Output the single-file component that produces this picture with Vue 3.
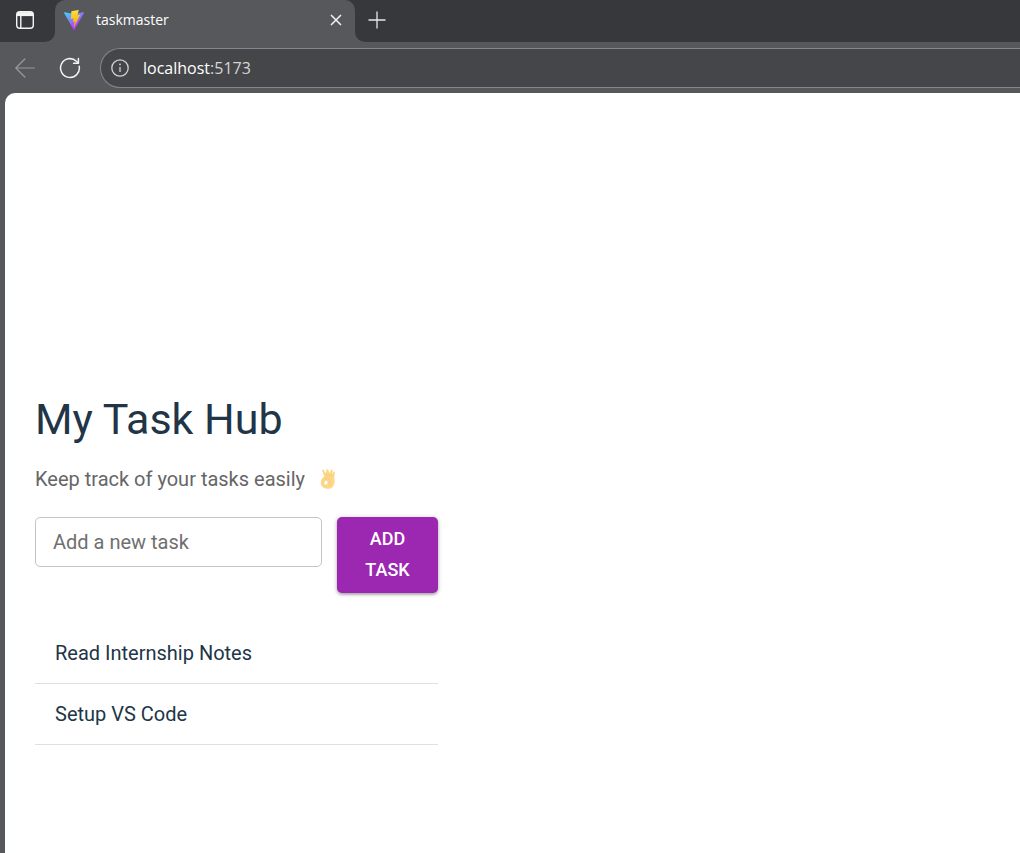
<script setup>
import { ref } from 'vue'

const draft = ref('')
const tasks = ref(['Read Internship Notes', 'Setup VS Code'])

function addTask() {
  const text = draft.value.trim()
  if (!text) return
  tasks.value.push(text)
  draft.value = ''
}
</script>

<template>
  <div class="browser">
    <header class="tabs">
      <div class="tabs-start">
        <button class="icon-button" type="button" aria-label="Tab actions">
          <svg width="20" height="20" viewBox="0 0 20 20" fill="none" stroke="#f4f4f4" stroke-width="1.4">
            <rect x="1.7" y="1.7" width="16.6" height="16.6" rx="3" />
            <path d="M2 4.1h16" stroke-width="4" />
            <path d="M5.8 6v12" />
          </svg>
        </button>
      </div>
      <div class="tab">
        <svg width="20" height="20" viewBox="0 0 256 257" aria-hidden="true">
          <defs>
            <linearGradient id="v-body" x1="0" x2="0.58" y1="0.08" y2="0.9">
              <stop offset="0" stop-color="#41d1ff" />
              <stop offset="1" stop-color="#bd34fe" />
            </linearGradient>
            <linearGradient id="v-bolt" x1="0.43" x2="0.5" y1="0.02" y2="0.9">
              <stop offset="0" stop-color="#ffea83" />
              <stop offset="0.08" stop-color="#ffdd35" />
              <stop offset="1" stop-color="#ffa800" />
            </linearGradient>
          </defs>
          <path fill="url(#v-body)" d="M255.153 37.938 134.897 252.976c-2.483 4.44-8.862 4.466-11.382.048L.875 37.958c-2.746-4.814 1.371-10.646 6.827-9.67l120.385 21.517a6.537 6.537 0 0 0 2.322-.004l117.867-21.483c5.438-.991 9.574 4.796 6.877 9.62Z" />
          <path fill="url(#v-bolt)" d="M185.432.063 96.44 17.501a3.268 3.268 0 0 0-2.634 3.014l-5.474 92.456a3.268 3.268 0 0 0 3.997 3.378l24.777-5.718c2.318-.535 4.413 1.507 3.936 3.838l-7.361 36.047c-.495 2.426 1.782 4.5 4.151 3.78l15.304-4.649c2.372-.72 4.652 1.36 4.15 3.788l-11.698 56.621c-.732 3.542 3.979 5.473 5.943 2.437l1.313-2.028 72.516-144.72c1.215-2.423-.88-5.186-3.54-4.672l-25.505 4.922c-2.396.462-4.435-1.77-3.759-4.114l16.646-57.705c.677-2.35-1.37-4.583-3.769-4.113Z" />
        </svg>
        <span class="tab-title">taskmaster</span>
        <button class="icon-button" type="button" aria-label="Close tab">
          <svg width="12" height="12" viewBox="0 0 12 12" stroke="#f4f4f4" stroke-width="1.5">
            <path d="M1 1l10 10M11 1L1 11" />
          </svg>
        </button>
      </div>
      <div class="tabs-end">
        <button class="icon-button" type="button" aria-label="New tab">
          <svg width="18" height="18" viewBox="0 0 18 18" stroke="#e8e8e8" stroke-width="1.3">
            <path d="M9 .5v17M.5 9h17" />
          </svg>
        </button>
      </div>
    </header>

    <nav class="toolbar">
      <button class="icon-button" type="button" aria-label="Back" disabled>
        <svg width="20" height="20" viewBox="0 0 20 20" fill="none" stroke="#97989b" stroke-width="1.2" stroke-linecap="round" stroke-linejoin="round">
          <path d="M19.4 10H.8M9.8 1L.8 10l9 9" />
        </svg>
      </button>
      <button class="icon-button" type="button" aria-label="Refresh">
        <svg width="22" height="22" viewBox="0 0 22 22" fill="none" stroke="#f4f4f4" stroke-width="1.5" stroke-linecap="round" stroke-linejoin="round">
          <path d="M20.2 9.3A9.4 9.4 0 1 1 17.4 4.2L19.3 6" />
          <path d="M19.4 1.4v4.8h-4.8" />
        </svg>
      </button>
      <div class="address">
        <svg width="18" height="18" viewBox="0 0 18 18" fill="none" stroke="#d2d2d3" stroke-width="1.3" aria-hidden="true">
          <circle cx="9" cy="9" r="8.2" />
          <path d="M9 8v5" />
          <circle cx="9" cy="5.4" r="0.9" fill="#d2d2d3" stroke="none" />
        </svg>
        <span class="url">localhost<span class="port">:5173</span></span>
      </div>
    </nav>

    <main class="page">
      <section class="hub">
        <h1>My Task Hub</h1>
        <p class="lead">
          Keep track of your tasks easily
          <svg class="hand" width="16" height="20" viewBox="0 0 16 20" role="img" aria-label="OK hand">
            <path fill="#fbd987" d="M2.200 1.800C1.900.6 3.400.1 3.900 1.200L6 4.600 6.300 1.300C6.400.1 8.200-.1 8.400 1l.9 3.300L10.900 1c.4-1 1.900-.6 1.700.5L12.100 5l1.100-2c.6-1 2.100-.4 1.700.8L14.200 8.300c1 2.600.5 7-1.200 9.300-1.400 1.900-3.500 2.500-5.900 2.200C3.600 19.400 1 17.500.8 14.300.6 11.300 2.100 8.600 4.300 7.700Z" />
            <path fill="none" stroke="#f4c577" stroke-width=".7" stroke-linecap="round" d="M6.200 4.800l1 3M9.300 4.500l.2 3M12 5.200l-.5 2.500M3 10.500C5 8.300 8 8.500 9.500 10.800M9.500 16.500c1.300-1.200 1.500-3.500.6-5" />
            <ellipse cx="5.900" cy="13.700" rx="2.200" ry="2.700" fill="#fff" stroke="#f2c06d" stroke-width=".7" transform="rotate(20 5.900 13.700)" />
          </svg>
        </p>
        <form class="entry" @submit.prevent="addTask">
          <input v-model="draft" type="text" placeholder="Add a new task" aria-label="Add a new task">
          <button class="add" type="submit">Add Task</button>
        </form>
        <ul class="tasks">
          <li v-for="(task, i) in tasks" :key="i">{{ task }}</li>
        </ul>
      </section>
    </main>
  </div>
</template>

<style>
body {
  margin: 0;
  background: #57585c;
}
</style>

<style scoped>
.browser {
  display: flex;
  flex-direction: column;
  min-height: 100vh;
  overflow: hidden;
  background: #57585c;
  font-family: Roboto, "Liberation Sans", sans-serif;
}

.icon-button {
  display: flex;
  padding: 0;
  border: 0;
  background: none;
}

.tabs {
  display: flex;
  height: 42px;
  background: linear-gradient(#37383b, #37383b) top / 100% 20px no-repeat, #57585c;
}

.tabs-start,
.tabs-end {
  display: flex;
  align-items: center;
  box-sizing: border-box;
  padding-bottom: 2px;
  background: #37383b;
}

.tabs-start {
  width: 55px;
  padding-left: 15px;
  border-bottom-right-radius: 10px;
}

.tabs-end {
  flex: 1;
  padding-left: 13px;
  padding-bottom: 3px;
  border-bottom-left-radius: 10px;
}

.tab {
  display: flex;
  align-items: center;
  box-sizing: border-box;
  width: 300px;
  padding: 0 13px 2px 9px;
  border-radius: 10px 10px 0 0;
  background: #57585c;
  color: #fff;
}

.tab-title {
  flex: 1;
  margin-left: 12px;
  padding-bottom: 2px;
  font-family: "Open Sans", "Noto Sans", sans-serif;
  font-size: 14px;
}

.toolbar {
  display: flex;
  align-items: center;
  padding: 6px 0 5px 15px;
}

.toolbar .icon-button + .icon-button {
  margin-left: 24px;
}

.address {
  display: flex;
  flex: 1;
  align-items: center;
  gap: 14px;
  height: 38px;
  margin-left: 19px;
  padding-left: 10px;
  border: 1px solid #85868a;
  border-right: 0;
  border-radius: 20px 0 0 20px;
  background: #454649;
}

.url {
  color: #fff;
  font-family: "Open Sans", "Noto Sans", sans-serif;
  font-size: 16px;
}

.port {
  color: #d5d5d6;
}

.page {
  flex: 1;
  margin-left: 5px;
  padding: 300px 30px 100px;
  border-top-left-radius: 10px;
  background: #fff;
  color: #213547;
}

.hub {
  max-width: 403px;
}

h1 {
  margin: 0 0 18px;
  font-size: 43px;
  font-weight: 400;
  line-height: 53px;
}

.lead {
  display: flex;
  align-items: center;
  gap: 15px;
  margin: 0 0 23px;
  color: #666;
  font-size: 20px;
  line-height: 30px;
}

.entry {
  display: flex;
  align-items: flex-start;
  gap: 15px;
  margin-bottom: 30px;
}

.entry input {
  flex: 1;
  box-sizing: border-box;
  min-width: 0;
  height: 50px;
  padding: 0 17px;
  border: 1px solid #c4c4c4;
  border-radius: 5px;
  background: #fff;
  color: #213547;
  font: inherit;
  font-size: 20px;
}

.entry input::placeholder {
  color: #6f6f6f;
  opacity: 1;
}

.add {
  width: 101px;
  padding: 6px 20px 8px;
  border: 0;
  border-radius: 5px;
  background: #9c27b0;
  box-shadow: 0 1px 4px rgba(0, 0, 0, 0.3), 0 2px 2px rgba(0, 0, 0, 0.14);
  color: #fff;
  font: inherit;
  font-size: 18px;
  font-weight: 500;
  line-height: 31px;
  text-transform: uppercase;
}

.tasks {
  margin: 0;
  padding: 0;
  list-style: none;
}

.tasks li {
  padding: 15px 20px;
  border-bottom: 1px solid #e0e0e0;
  font-size: 20px;
  line-height: 30px;
}
</style>
